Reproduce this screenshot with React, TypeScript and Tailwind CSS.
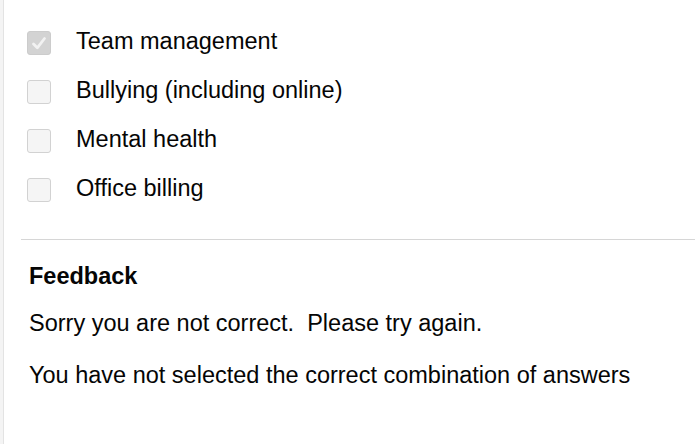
import React from "react";

const options = [
  { label: "Team management", checked: true },
  { label: "Bullying (including online)", checked: false },
  { label: "Mental health", checked: false },
  { label: "Office billing", checked: false },
];

function Box({ checked }: { checked: boolean }) {
  if (checked) {
    return (
      <div className="w-[24px] h-[24px] rounded-[3px] bg-[#d3d3d3] border border-[#cccccc] flex items-center justify-center shrink-0">
        <svg width="22" height="22" viewBox="1 1 22 22">
          <path d="M6.5 13 L10.3 16.8 L17.5 7.5" fill="none" stroke="#f2f2f2" strokeWidth="2.8" strokeLinecap="round" strokeLinejoin="round" />
        </svg>
      </div>
    );
  }
  return <div className="w-[24px] h-[24px] rounded-[3px] bg-[#f5f5f5] border border-[#d2d2d2] shrink-0" />;
}

export default function App() {
  return (
    <div className="w-[695px] h-[444px] bg-white flex overflow-hidden" style={{ fontFamily: '"Liberation Sans", Arial, sans-serif' }}>
      <div className="w-[4px] h-full bg-[#f4f4f4] border-r border-[#e3e3e3] shrink-0" />
      <div className="flex-1 flex flex-col">
        <div className="flex flex-col gap-[25px] pt-[31px] pl-[23px]">
          {options.map((o) => (
            <div key={o.label} className="flex items-center gap-[25px] h-[24px]">
              <Box checked={o.checked} />
              <span className="text-[23.5px] leading-[24px] text-[#050505] -mt-[4px]">{o.label}</span>
            </div>
          ))}
        </div>
        <div className="ml-[17px] mt-[37px] border-t border-[#d6d6d6]" />
        <div className="pl-[25px] pt-[23px] text-[#050505]">
          <div className="text-[23.5px] font-bold leading-[26px]">Feedback</div>
          <div className="text-[23.5px] leading-[26px] mt-[21px] whitespace-pre">Sorry you are not correct.  Please try again.</div>
          <div className="text-[23.5px] leading-[26px] mt-[26px]">You have not selected the correct combination of answers</div>
        </div>
      </div>
    </div>
  );
}
